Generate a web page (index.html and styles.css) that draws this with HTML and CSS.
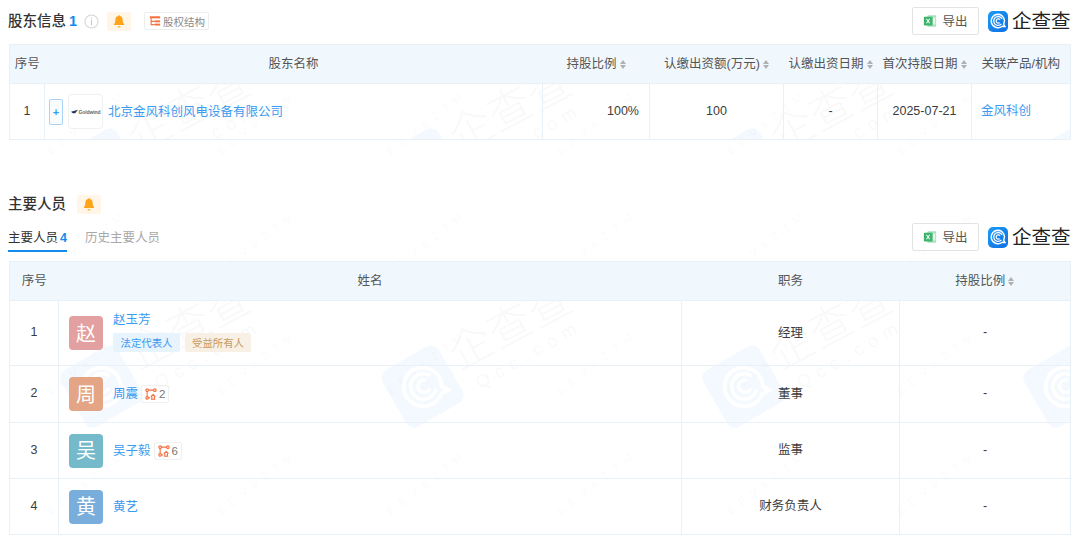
FILE: index.html
```html
<!DOCTYPE html>
<html lang="zh-CN">
<head>
<meta charset="utf-8">
<title>股东信息</title>
<link rel="stylesheet" href="styles.css">
</head>
<body>
<svg class="sprite" aria-hidden="true">
  <symbol id="qcc" viewBox="0 0 40 40">
    <path d="M20 5a15 15 0 1 0 9.500 26.600l6 .4-3-5A15 15 0 0 0 20 5z" fill="none" stroke="currentColor" stroke-width="3"/>
    <path d="M27.500 26.500a9.800 9.800 0 1 1 1.500-11" fill="none" stroke="currentColor" stroke-width="2.800"/>
    <path d="M24 23.500a4.800 4.800 0 1 1 .5-6.500" fill="none" stroke="currentColor" stroke-width="2.600"/>
  </symbol>
  <symbol id="bell" viewBox="0 0 16 16">
    <path d="M8 1.300c.7 0 1.100.4 1.200 1 2 .5 3 2.200 3 4.200 0 2.500.5 3.900 1.600 5.100v.9H2.200v-.9c1.100-1.200 1.600-2.600 1.600-5.100 0-2 1-3.700 3-4.200.1-.6.500-1 1.200-1z" fill="#ffa31a"/>
    <path d="M6.200 13.900h3.600a1.800 1.600 0 0 1-3.600 0z" fill="#ffa31a"/>
  </symbol>
  <symbol id="excel" viewBox="0 0 16 16">
    <rect x="5" y="1.500" width="10" height="13" rx="1" fill="#a9e0bd"/>
    <rect x="10" y="4" width="4" height="8" fill="#e4f6ea"/>
    <rect x="1" y="3" width="10" height="10" rx="1" fill="#3cb56a"/>
    <path d="M4 5.500l3.600 5M7.600 5.500L4 10.500" stroke="#fff" stroke-width="1.200"/>
  </symbol>
  <symbol id="tree" viewBox="0 0 14 14">
    <rect x="1" y="1.500" width="12" height="2.400" fill="#f4703f"/>
    <path d="M2.500 3.900v7.300h4M2.500 7.400h4" fill="none" stroke="#f4703f" stroke-width="1.300"/>
    <rect x="6.500" y="6.300" width="6.500" height="2.200" fill="#f4703f"/>
    <rect x="6.500" y="10.100" width="6.500" height="2.200" fill="#f4703f"/>
  </symbol>
  <symbol id="rel" viewBox="0 0 14 14">
    <g fill="none" stroke="#f4703f" stroke-width="1.300">
      <circle cx="2.500" cy="2.500" r="1.500"/><circle cx="11.500" cy="2.500" r="1.500"/><circle cx="2.500" cy="11.500" r="1.500"/>
      <path d="M4 2.500h6M2.500 4v6M4 11.500h2"/>
      <path d="M6.800 10l2.700-2.500L12.200 10M8 10v3.200h3V10M7 13.200h5"/>
    </g>
  </symbol>
</svg>

<div class="codes" aria-hidden="true">
  <span>EEV6Z7M</span><span>EEV6Z7M</span><span>EEV6Z7M</span><span>EEV6Z7M</span><span>EEV6Z7M</span><span>EEV6Z7M</span>
  <span>EEV6Z7M</span><span>EEV6Z7M</span><span>EEV6Z7M</span><span>EEV6Z7M</span><span>EEV6Z7M</span><span>EEV6Z7M</span>
  <span>EEV6Z7M</span><span>EEV6Z7M</span><span>EEV6Z7M</span><span>EEV6Z7M</span><span>EEV6Z7M</span><span>EEV6Z7M</span>
  <span>EEV6Z7M</span><span>EEV6Z7M</span><span>EEV6Z7M</span><span>EEV6Z7M</span><span>EEV6Z7M</span><span>EEV6Z7M</span>
</div>

<section class="section">
  <div class="head head-first">
    <div class="head-left">
      <h2 class="title">股东信息<span class="count">1</span></h2>
      <svg class="info" viewBox="0 0 16 16"><circle cx="8" cy="8" r="7" fill="none" stroke="#d4d4d4" stroke-width="1.100"/><rect x="7.400" y="3.800" width="1.200" height="1.400" fill="#c8c8c8"/><rect x="7.400" y="6.400" width="1.200" height="5.600" fill="#c8c8c8"/></svg>
      <span class="bell-box"><svg class="bell"><use href="#bell"/></svg></span>
      <span class="chip"><svg class="chip-icon"><use href="#tree"/></svg>股权结构</span>
    </div>
    <div class="tools">
      <button class="export"><svg class="excel"><use href="#excel"/></svg><span class="export-text">导出</span></button>
      <div class="brand"><span class="brand-mark"><svg class="brand-c"><use href="#qcc"/></svg></span><span class="brand-text">企查查</span></div>
    </div>
  </div>
  <div class="table-wrap">
    <div class="watermark" aria-hidden="true">
      <div class="tile"><span class="wm-logo"><svg class="wm-c"><use href="#qcc"/></svg></span><span class="wm-name">企查查</span><span class="wm-url">Qcc.com</span></div>
      <div class="tile"><span class="wm-logo"><svg class="wm-c"><use href="#qcc"/></svg></span><span class="wm-name">企查查</span><span class="wm-url">Qcc.com</span></div>
      <div class="tile"><span class="wm-logo"><svg class="wm-c"><use href="#qcc"/></svg></span><span class="wm-name">企查查</span><span class="wm-url">Qcc.com</span></div>
      <div class="tile"><span class="wm-logo"><svg class="wm-c"><use href="#qcc"/></svg></span></div>
    </div>
    <table class="grid">
      <colgroup><col class="c35"><col class="c498"><col class="c107"><col class="c134"><col class="c94"><col class="c94"><col class="c99"></colgroup>
      <thead>
        <tr>
          <th>序号</th>
          <th>股东名称</th>
          <th>持股比例<i class="sort"></i></th>
          <th>认缴出资额(万元)<i class="sort"></i></th>
          <th>认缴出资日期<i class="sort"></i></th>
          <th>首次持股日期<i class="sort"></i></th>
          <th>关联产品/机构</th>
        </tr>
      </thead>
      <tbody>
        <tr class="r56">
          <td class="center">1</td>
          <td>
            <div class="holder">
              <span class="plus">+</span>
              <span class="co-logo"><svg class="swoosh" viewBox="0 0 10 6"><path d="M0 3.500L10 .5 6 5.500H2.500z" fill="#1e3a5c"/></svg><span class="co-name">Goldwind</span></span>
              <a class="link">北京金风科创风电设备有限公司</a>
            </div>
          </td>
          <td class="right">100%</td>
          <td class="center">100</td>
          <td class="center">-</td>
          <td class="center">2025-07-21</td>
          <td class="cn"><a class="link">金风科创</a></td>
        </tr>
      </tbody>
    </table>
  </div>
</section>

<section class="section second">
  <div class="head-left title-row">
    <h2 class="title">主要人员</h2>
    <span class="bell-box"><svg class="bell"><use href="#bell"/></svg></span>
  </div>
  <div class="tabs-row">
    <div class="tabs">
      <span class="tab active">主要人员<b class="count-sm">4</b></span>
      <span class="tab muted">历史主要人员</span>
    </div>
    <div class="tools">
      <button class="export"><svg class="excel"><use href="#excel"/></svg><span class="export-text">导出</span></button>
      <div class="brand"><span class="brand-mark"><svg class="brand-c"><use href="#qcc"/></svg></span><span class="brand-text">企查查</span></div>
    </div>
  </div>
  <div class="table-wrap">
    <div class="watermark" aria-hidden="true">
      <div class="tile"><span class="wm-logo"><svg class="wm-c"><use href="#qcc"/></svg></span><span class="wm-name">企查查</span><span class="wm-url">Qcc.com</span></div>
      <div class="tile"><span class="wm-logo"><svg class="wm-c"><use href="#qcc"/></svg></span><span class="wm-name">企查查</span><span class="wm-url">Qcc.com</span></div>
      <div class="tile"><span class="wm-logo"><svg class="wm-c"><use href="#qcc"/></svg></span><span class="wm-name">企查查</span><span class="wm-url">Qcc.com</span></div>
      <div class="tile"><span class="wm-logo"><svg class="wm-c"><use href="#qcc"/></svg></span></div>
    </div>
    <table class="grid">
      <colgroup><col class="c49"><col class="c623"><col class="c218"><col class="c171"></colgroup>
      <thead>
        <tr>
          <th>序号</th>
          <th>姓名</th>
          <th>职务</th>
          <th>持股比例<i class="sort"></i></th>
        </tr>
      </thead>
      <tbody>
        <tr class="r65">
          <td class="center">1</td>
          <td>
            <div class="person">
              <span class="avatar red">赵</span>
              <div class="stack">
                <a class="link">赵玉芳</a>
                <div class="tags"><span class="tag tag-blue">法定代表人</span><span class="tag tag-tan">受益所有人</span></div>
              </div>
            </div>
          </td>
          <td class="center cn">经理</td>
          <td class="center">-</td>
        </tr>
        <tr class="r57">
          <td class="center">2</td>
          <td>
            <div class="person">
              <span class="avatar orange">周</span>
              <a class="link">周震</a>
              <span class="rel"><svg class="rel-icon"><use href="#rel"/></svg>2</span>
            </div>
          </td>
          <td class="center cn">董事</td>
          <td class="center">-</td>
        </tr>
        <tr class="r56">
          <td class="center">3</td>
          <td>
            <div class="person">
              <span class="avatar teal">吴</span>
              <a class="link">吴子毅</a>
              <span class="rel"><svg class="rel-icon"><use href="#rel"/></svg>6</span>
            </div>
          </td>
          <td class="center cn">监事</td>
          <td class="center">-</td>
        </tr>
        <tr class="r56">
          <td class="center">4</td>
          <td>
            <div class="person">
              <span class="avatar blue">黄</span>
              <a class="link">黄艺</a>
            </div>
          </td>
          <td class="center cn">财务负责人</td>
          <td class="center">-</td>
        </tr>
      </tbody>
    </table>
  </div>
</section>
</body>
</html>
```

FILE: styles.css
```css
* { box-sizing: border-box; }
html, body { margin: 0; height: 100%; }
body {
  position: relative;
  overflow: hidden;
  width: 1080px;
  height: 552px;
  padding-left: 9px;
  background: #fff;
  color: #3c3c3c;
  font-family: "Liberation Sans", "Noto Sans CJK SC", sans-serif;
  font-size: 12.5px;
}
.sprite { position: absolute; width: 0; height: 0; }

.codes {
  position: absolute; left: 30px; top: 40px; z-index: 0;
  display: grid; grid-template-columns: repeat(6, 170px); grid-auto-rows: 120px;
  pointer-events: none;
}
.codes span {
  font-size: 11px; letter-spacing: 7px; white-space: nowrap; align-self: center;
  color: rgba(90, 110, 140, .05);
  transform: rotate(-38deg);
}

.section { position: relative; z-index: 1; width: 1061px; }
.head { display: flex; justify-content: space-between; align-items: center; }
.head-first { height: 44px; padding-bottom: 2px; margin-left: -1px; }
.head-left { display: flex; align-items: center; }
.title { margin: 0; font-size: 14.5px; font-weight: 500; line-height: 20px; color: #333; }
.count { margin-left: 3px; font-weight: 700; color: #128bed; }
.info { width: 15px; height: 15px; margin-left: 7px; }
.bell-box {
  display: flex; align-items: center; justify-content: center;
  width: 24px; height: 19px; margin-left: 8px;
  background: #fff6e8; border-radius: 2px;
}
.title-row .bell-box { margin-left: 11px; }
.bell { width: 14px; height: 14px; }
.chip {
  display: flex; align-items: center;
  height: 18px; margin-left: 13px; padding: 0 3px 0 4px;
  border: 1px solid #eeeeee; border-radius: 2px;
  font-size: 10.5px; color: #8a8a8a;
}
.chip-icon { width: 12px; height: 12px; margin-right: 2px; }

.tools { display: flex; align-items: center; }
.export {
  display: flex; align-items: center; justify-content: center;
  width: 67px; height: 28px; padding: 0;
  background: #fff; border: 1px solid #e3e3e3; border-radius: 2px;
  font: inherit; color: #555;
}
.export-text { padding-bottom: 2px; }
.excel { width: 14px; height: 14px; margin-right: 5px; }
.brand { display: flex; align-items: center; margin-left: 9px; }
.brand-mark {
  display: flex; align-items: center; justify-content: center;
  width: 20px; height: 21px;
  border-radius: 5px;
  background: linear-gradient(135deg, #1c9cf6, #0f6fe0);
  color: #fff;
}
.brand-c { width: 18px; height: 18px; }
.brand-text {
  width: 58px; margin-left: 4px;
  font-size: 19.500px; line-height: 22px; font-weight: 400; color: #222; white-space: nowrap;
}

.table-wrap { position: relative; width: 1061px; }
.grid {
  position: relative;
  width: 1061px;
  table-layout: fixed;
  border-collapse: collapse;
  border: 1px solid #e9f1f8;
}
.c35 { width: 35px; } .c498 { width: 498px; } .c107 { width: 107px; } .c134 { width: 134px; }
.c94 { width: 94px; } .c99 { width: 99px; } .c49 { width: 49px; } .c623 { width: 623px; }
.c218 { width: 218px; } .c171 { width: 171px; }
.grid th {
  height: 39px; padding: 0 0 3px;
  background: #f1f8fd;
  border-bottom: 1px solid #e9f1f8;
  font-weight: 400; color: #555; text-align: center; white-space: nowrap;
}
.grid td {
  padding: 0 0 0 9px;
  border: 1px solid #e9f1f8;
  color: #3c3c3c;
}
.grid td.center { padding: 0 0 2px; text-align: center; }
.grid td.right { padding: 0 10px 2px 0; text-align: right; }
.grid td.cn { padding-bottom: 4px; }
.r65 { height: 65px; } .r57 { height: 57px; } .r56 { height: 56px; }
.sort {
  display: inline-block; position: relative;
  width: 6px; height: 9px; margin-left: 3px; vertical-align: -1px;
}
.sort::before, .sort::after {
  content: ""; position: absolute; left: 0;
  border-left: 3px solid transparent; border-right: 3px solid transparent;
}
.sort::before { top: 0; border-bottom: 4px solid #b0b0b0; }
.sort::after { bottom: 0; border-top: 4px solid #b0b0b0; }

.link { color: #3a9bf0; white-space: nowrap; }
.holder { display: flex; align-items: center; margin-left: -5px; }
.holder .link, .person > .link { padding-bottom: 3px; }
.plus {
  display: flex; align-items: center; justify-content: center;
  width: 14px; height: 26px;
  border: 1px solid #a8d2f6; border-radius: 2px; background: #f8fcff;
  font-size: 11px; font-weight: 700; color: #3a9bf0;
}
.co-logo {
  display: flex; align-items: center; justify-content: center; gap: 1px;
  width: 35px; height: 35px; margin-left: 5px; margin-right: 5px;
  border: 1px solid #f0f0f0; border-radius: 4px; background: #fff;
}
.swoosh { width: 7px; height: 5px; }
.co-name { font-size: 5px; font-weight: 700; color: #666; letter-spacing: -.1px; }

.second { margin-top: 50px; }
.title-row { height: 28px; margin-left: -1px; }
.tabs-row { display: flex; justify-content: space-between; align-items: flex-start; margin-top: 5px; height: 38px; margin-left: -1px; }
.tabs { display: flex; gap: 18px; height: 29px; }
.tab { height: 29px; line-height: 31px; }
.tab.active { color: #333; border-bottom: 2px solid #128bed; }
.tab.muted { color: #a8a8a8; }
.count-sm { margin-left: 2px; color: #128bed; }

.person { display: flex; align-items: center; margin-left: 1px; }
.avatar {
  display: flex; align-items: center; justify-content: center; flex: none;
  width: 34px; height: 34px; margin-right: 10px; padding-bottom: 2px;
  border-radius: 4px; font-size: 20px; color: #fff;
}
.red { background: #e3a0a0; } .orange { background: #e3a585; }
.teal { background: #74bacb; } .blue { background: #78addc; }
.stack { display: flex; flex-direction: column; gap: 5px; margin-top: -5px; }
.tags { display: flex; gap: 5px; }
.tag {
  display: flex; align-items: center; justify-content: center;
  width: 67px; height: 19px; border-radius: 2px; font-size: 10.400px;
}
.tag-blue { background: #e7f3fd; color: #3a9bf0; }
.tag-tan { background: #f9f0e5; color: #c49a62; width: 66px; }
.rel {
  display: flex; align-items: center;
  height: 18px; margin-left: 3px; padding: 0 3px;
  border: 1px solid #f0f0f0; border-radius: 2px;
  font-size: 11.500px; color: #777;
}
.rel-icon { width: 12px; height: 12px; margin-right: 2px; }

.watermark {
  position: absolute; left: 0; right: 0; top: 39px; bottom: 0;
  overflow: hidden;
  display: flex;
  padding-left: 0;
  pointer-events: none;
}
.tile { position: relative; flex: none; width: 321px; height: 100%; margin-left: 0; }
.tile:first-child { margin-left: -68px; }
.wm-logo {
  position: absolute; left: 128px; top: 54px;
  display: flex; align-items: center; justify-content: center;
  width: 65px; height: 65px; border-radius: 9px;
  background: rgba(18, 139, 237, .05);
  color: #fff;
  transform: rotate(-30deg);
}
.wm-c { width: 52px; height: 52px; }
.wm-name {
  position: absolute; left: 182px; top: 1px;
  font-size: 44px; line-height: 50px; font-weight: 300; white-space: nowrap;
  color: rgba(70, 80, 100, .055);
  transform: rotate(-28deg);
}
.wm-url {
  position: absolute; left: 207px; top: 43px;
  font-size: 18px; line-height: 22px; letter-spacing: 7px; white-space: nowrap;
  color: rgba(70, 80, 100, .055);
  transform: rotate(-30deg);
}
```
